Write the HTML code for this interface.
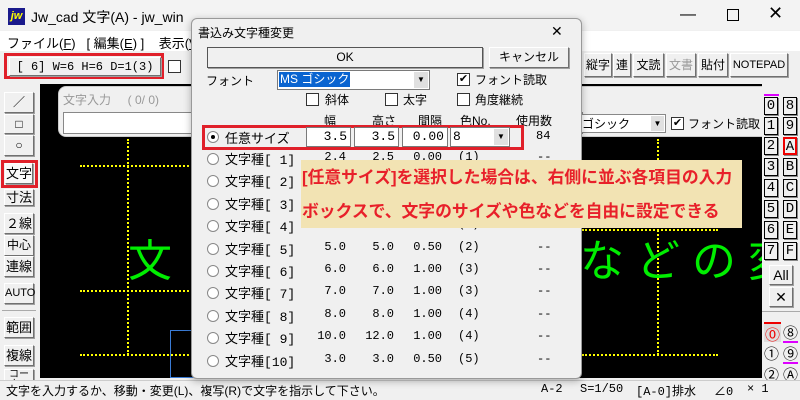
<!DOCTYPE html>
<html><head><meta charset="utf-8">
<style>
*{box-sizing:border-box;margin:0;padding:0}
body{width:800px;height:400px;overflow:hidden;position:relative;background:#f0f0f0;font-family:"Liberation Sans","Noto Sans CJK JP",sans-serif;font-size:12px;color:#000}
.a{position:absolute}
.btn{position:absolute;background:#f0f0f0;border:1px solid;border-color:#fff #707070 #707070 #fff;box-shadow:1px 1px 0 #a0a0a0;text-align:center;font-size:12px}
.rb{position:absolute;width:14px;height:18px;border:1px solid #000;background:#f0f0f0;font-family:"Liberation Mono",monospace;font-size:14px;text-align:center;line-height:16px;box-shadow:1px 1px 0 #888}
.cb{position:absolute;width:13px;height:13px;border:1px solid #333;background:#fff;font-size:11px;line-height:11px;text-align:center}
.radio{position:absolute;width:12px;height:12px;border-radius:50%;border:1px solid #888;background:#fff}
.mono{font-family:"Liberation Mono","Noto Sans CJK JP",monospace}
.inp{position:absolute;background:#fff;border:1px solid #7a7a7a;font-family:"Liberation Mono",monospace;font-size:13px;text-align:right;padding-right:3px;line-height:18px;height:20px}
.dot{position:absolute;border-color:#ff0;border-style:dotted;border-width:0}
</style></head><body>
<div class="a" style="left:0;top:0;width:800px;height:30px;background:#f3f3f3"></div>
<div class="a" style="left:8px;top:8px;width:17px;height:17px;background:#1a1a8c;color:#ff0;font-weight:bold;font-style:italic;font-size:11px;line-height:16px;text-align:center">jw</div>
<div class="a" style="left:31px;top:7px;font-size:14px">Jw_cad 文字(A) - jw_win</div>
<div class="a" style="left:680px;top:6px;font-size:16px">—</div>
<div class="a" style="left:727px;top:9px;width:12px;height:12px;border:1px solid #000"></div>
<div class="a" style="left:768px;top:3px;font-size:18px">✕</div>
<div class="a" style="left:0;top:31px;width:800px;height:20px;background:#fff"></div>
<div class="a" style="left:7px;top:33px;font-size:13px">ファイル(<u>F</u>)&nbsp;&nbsp;&nbsp;[ 編集(<u>E</u>) ]&nbsp;&nbsp;&nbsp;&nbsp;表示(<u>V</u>)</div>
<div class="a" style="left:4px;top:53px;width:160px;height:26px;border:3px solid #e0202a"></div>
<div class="btn" style="left:9px;top:57px;width:152px;height:19px;line-height:17px" ><span class="mono">[ 6] W=6 H=6 D=1(3)</span></div>
<div class="cb" style="left:168px;top:60px"></div>
<div class="btn" style="left:584px;top:53px;width:28px;height:24px;line-height:22px">縦字</div>
<div class="btn" style="left:613px;top:53px;width:18px;height:24px;line-height:22px">連</div>
<div class="btn" style="left:633px;top:53px;width:31px;height:24px;line-height:22px">文読</div>
<div class="btn" style="left:666px;top:53px;width:30px;height:24px;line-height:22px;color:#999">文書</div>
<div class="btn" style="left:698px;top:53px;width:30px;height:24px;line-height:22px">貼付</div>
<div class="btn" style="left:730px;top:53px;width:58px;height:24px;line-height:22px;font-size:11px">NOTEPAD</div>
<div class="a" style="left:40px;top:84px;width:722px;height:294px;background:#000"></div>
<div class="a" style="left:58px;top:86px;width:720px;height:51px;background:#f0f0f0;border-radius:8px;border:1px solid #ccc"></div>
<div class="a" style="left:63px;top:91px;color:#999;font-size:12px">文字入力&nbsp;&nbsp;&nbsp;&nbsp;&nbsp;( 0/ 0)</div>
<div class="a" style="left:63px;top:112px;width:520px;height:22px;background:#fff;border:1px solid #888"></div>
<div class="a" style="left:581px;top:114px;width:85px;height:19px;background:#fff;border:1px solid #888;font-size:12px">ゴシック</div>
<div class="a" style="left:651px;top:116px;width:13px;height:15px;background:#e0e0e0;font-size:8px;text-align:center;line-height:15px">▼</div>
<div class="cb" style="left:671px;top:117px">✔</div>
<div class="a" style="left:688px;top:115px;font-size:12px">フォント読取</div>
<div class="dot" style="left:80px;top:165px;width:500px;border-top-width:2px"></div>
<div class="dot" style="left:80px;top:290px;width:500px;border-top-width:2px"></div>
<div class="dot" style="left:80px;top:354px;width:240px;border-top-width:2px"></div>
<div class="dot" style="left:127px;top:139px;border-left-width:2px;height:216px"></div>
<div class="dot" style="left:657px;top:139px;border-left-width:2px;height:216px"></div>
<div class="dot" style="left:582px;top:229px;width:136px;border-top-width:2px"></div>
<div class="dot" style="left:582px;top:354px;width:136px;border-top-width:2px"></div>
<div class="a" style="left:170px;top:330px;width:30px;height:48px;border:1px solid #3a7bd5"></div>
<div class="a" style="left:128px;top:237px;color:#00ee00;font-size:44px;line-height:50px">文</div>
<div class="a" style="left:580px;top:237px;color:#00ee00;font-size:44px;line-height:50px;letter-spacing:12px;white-space:nowrap">などの変</div>
<div class="a" style="left:0;top:84px;width:40px;height:296px;background:#f0f0f0"></div>
<div class="btn" style="left:4px;top:92px;width:30px;height:21px;line-height:19px">／</div>
<div class="btn" style="left:4px;top:114px;width:30px;height:20px;line-height:18px">□</div>
<div class="btn" style="left:4px;top:135px;width:30px;height:21px;line-height:19px">○</div>
<div class="a" style="left:1px;top:160px;width:37px;height:28px;border:3px solid #e0202a"></div>
<div class="btn" style="left:5px;top:163px;width:28px;height:21px;line-height:19px;font-size:13px;background:#fafafa">文字</div>
<div class="btn" style="left:4px;top:189px;width:30px;height:17px;line-height:15px;font-size:13px">寸法</div>
<div class="btn" style="left:4px;top:213px;width:30px;height:21px;line-height:19px;font-size:13px">２線</div>
<div class="btn" style="left:4px;top:235px;width:30px;height:21px;line-height:19px;font-size:12px">中心線</div>
<div class="btn" style="left:4px;top:256px;width:30px;height:21px;line-height:19px;font-size:13px">連線</div>
<div class="btn" style="left:4px;top:283px;width:30px;height:21px;line-height:19px;font-size:11px">AUTO</div>
<div class="a" style="left:2px;top:310px;width:34px;height:1px;background:#aaa"></div>
<div class="btn" style="left:4px;top:317px;width:30px;height:21px;line-height:19px;font-size:13px">範囲</div>
<div class="btn" style="left:4px;top:345px;width:30px;height:21px;line-height:19px;font-size:13px">複線</div>
<div class="btn" style="left:4px;top:369px;width:30px;height:12px;line-height:10px;font-size:10px;overflow:hidden">コーナー</div>
<div class="a" style="left:762px;top:84px;width:38px;height:296px;background:#f0f0f0"></div>
<div class="a" style="left:764px;top:94px;width:15px;height:2px;background:#d0f"></div>
<div class="rb" style="left:764px;top:97px">0</div><div class="rb" style="left:783px;top:97px">8</div>
<div class="rb" style="left:764px;top:117px">1</div><div class="rb" style="left:783px;top:117px">9</div>
<div class="rb" style="left:764px;top:137px">2</div><div class="rb" style="left:783px;top:137px;border:2px solid #e00">A</div>
<div class="rb" style="left:764px;top:158px">3</div><div class="rb" style="left:783px;top:158px">B</div>
<div class="rb" style="left:764px;top:179px">4</div><div class="rb" style="left:783px;top:179px">C</div>
<div class="rb" style="left:764px;top:200px">5</div><div class="rb" style="left:783px;top:200px">D</div>
<div class="rb" style="left:764px;top:221px">6</div><div class="rb" style="left:783px;top:221px">E</div>
<div class="rb" style="left:764px;top:242px">7</div><div class="rb" style="left:783px;top:242px">F</div>
<div class="btn" style="left:769px;top:265px;width:24px;height:20px;line-height:18px;font-size:14px">All</div>
<div class="btn" style="left:769px;top:287px;width:24px;height:20px;line-height:18px;font-size:14px">✕</div>
<div class="a" style="left:762px;top:311px;width:38px;height:1px;background:#aaa"></div>
<div class="a" style="left:764px;top:322px;width:17px;height:20px;background:#ddd;color:#e00;font-size:15px;text-align:center;border-top:2px solid #e00">⓪</div>
<div class="a" style="left:783px;top:322px;font-size:15px">⑧</div>
<div class="a" style="left:764px;top:343px;font-size:15px">①</div>
<div class="a" style="left:783px;top:341px;width:15px;height:2px;background:#d0f"></div><div class="a" style="left:783px;top:343px;font-size:15px">⑨</div>
<div class="a" style="left:764px;top:364px;font-size:15px">②</div>
<div class="a" style="left:783px;top:362px;width:15px;height:2px;background:#d0f"></div><div class="a" style="left:783px;top:364px;font-size:15px">Ⓐ</div>
<div class="a" style="left:0;top:380px;width:800px;height:20px;background:#f0f0f0;border-top:1px solid #ccc"></div>
<div class="a" style="left:6px;top:382px;font-size:12px">文字を入力するか、移動・変更(L)、複写(R)で文字を指示して下さい。</div>
<div class="a mono" style="left:541px;top:382px;font-size:12px">A-2</div>
<div class="a mono" style="left:580px;top:382px;font-size:12px">S=1/50</div>
<div class="a mono" style="left:636px;top:382px;font-size:12px">[A-0]排水</div>
<div class="a mono" style="left:714px;top:382px;font-size:12px">∠0</div>
<div class="a mono" style="left:747px;top:382px;font-size:12px">× 1</div>
<div class="a" style="left:191px;top:18px;width:391px;height:361px;background:#f0f0f0;border:1px solid #999;border-radius:6px;box-shadow:0 2px 8px rgba(0,0,0,.3)">
 <div class="a" style="left:6px;top:5px;font-size:12px">書込み文字種変更</div>
 <div class="a" style="left:359px;top:4px;font-size:14px">✕</div>
 <div class="btn" style="left:15px;top:28px;width:276px;height:21px;line-height:19px;border:1px solid #555">OK</div>
 <div class="btn" style="left:297px;top:28px;width:80px;height:21px;line-height:19px">キャンセル</div>
 <div class="a" style="left:14px;top:53px;font-size:12px">フォント</div>
 <div class="a" style="left:85px;top:51px;width:153px;height:20px;background:#fff;border:1px solid #7a7a7a"></div>
 <div class="a" style="left:87px;top:53px;background:#0a64d0;color:#fff;font-size:12px;padding:0 1px;line-height:15px">MS ゴシック</div>
 <div class="a" style="left:222px;top:53px;width:14px;height:16px;background:#e0e0e0;font-size:8px;text-align:center;line-height:16px">▼</div>
 <div class="cb" style="left:265px;top:54px">✔</div><div class="a" style="left:283px;top:52px">フォント読取</div>
 <div class="cb" style="left:114px;top:74px"></div><div class="a" style="left:133px;top:72px">斜体</div>
 <div class="cb" style="left:193px;top:74px"></div><div class="a" style="left:211px;top:72px">太字</div>
 <div class="cb" style="left:265px;top:74px"></div><div class="a" style="left:283px;top:72px">角度継続</div>
 <div class="a" style="left:132px;top:93px">幅</div>
 <div class="a" style="left:180px;top:93px">高さ</div>
 <div class="a" style="left:226px;top:93px">間隔</div>
 <div class="a" style="left:268px;top:93px">色No.</div>
 <div class="a" style="left:324px;top:93px">使用数</div>
 <div class="a" style="left:10px;top:106px;width:322px;height:25px;border:3px solid #e0202a"></div>
 <div class="radio" style="left:15px;top:112px"></div><div class="a" style="left:19px;top:116px;width:4px;height:4px;border-radius:50%;background:#000"></div>
 <div class="a" style="left:33px;top:109px;font-size:13px">任意サイズ</div>
 <div class="inp" style="left:114px;top:108px;width:45px">3.5</div>
 <div class="inp" style="left:162px;top:108px;width:45px">3.5</div>
 <div class="inp" style="left:210px;top:108px;width:46px">0.00</div>
 <div class="inp" style="left:258px;top:108px;width:60px;text-align:left;padding-left:2px">8</div>
 <div class="a" style="left:302px;top:110px;width:14px;height:16px;background:#e0e0e0;font-size:8px;text-align:center;line-height:16px">▼</div>
 <div class="a mono" style="left:344px;top:110px;font-size:12px">84</div>
 <div id="rows"></div>
</div>
<div class="a" style="left:301px;top:160px;width:441px;height:68px;background:#f2e3b3"></div>
<div class="a" style="left:302px;top:166px;color:#e8202a;font-weight:bold;font-size:16.8px;white-space:nowrap;line-height:24px">[任意サイズ]を選択した場合は、右側に並ぶ各項目の入力</div>
<div class="a" style="left:302px;top:200px;color:#e8202a;font-weight:bold;font-size:16.8px;white-space:nowrap;line-height:24px">ボックスで、文字のサイズや色などを自由に設定できる</div>
<script>
var d=[["[ 1]","2.4","2.5","0.00","(1)"],["[ 2]","","","",""],["[ 3]","","","",""],["[ 4]","4.0","4.0","0.50","(2)"],["[ 5]","5.0","5.0","0.50","(2)"],["[ 6]","6.0","6.0","1.00","(3)"],["[ 7]","7.0","7.0","1.00","(3)"],["[ 8]","8.0","8.0","1.00","(4)"],["[ 9]","10.0","12.0","1.00","(4)"],["[10]","3.0","3.0","0.50","(5)"]];
var h="";d.forEach(function(r,i){var y=130+i*22.4;
h+='<div class="radio" style="left:15px;top:'+(y+4)+'px"></div><div class="a" style="left:33px;top:'+y+'px;font-size:13px">文字種<span class="mono">'+r[0]+'</span></div>';
h+='<div class="a mono" style="left:100px;width:54px;text-align:right;top:'+(y+1)+'px;font-size:12px">'+r[1]+'</div>';
h+='<div class="a mono" style="left:150px;width:52px;text-align:right;top:'+(y+1)+'px;font-size:12px">'+r[2]+'</div>';
h+='<div class="a mono" style="left:200px;width:50px;text-align:right;top:'+(y+1)+'px;font-size:12px">'+r[3]+'</div>';
h+='<div class="a mono" style="left:266px;top:'+(y+1)+'px;font-size:12px">'+r[4]+'</div>';
h+='<div class="a mono" style="left:345px;top:'+(y+1)+'px;font-size:12px">--</div>';});
document.getElementById("rows").outerHTML=h;
</script>
</body></html>
